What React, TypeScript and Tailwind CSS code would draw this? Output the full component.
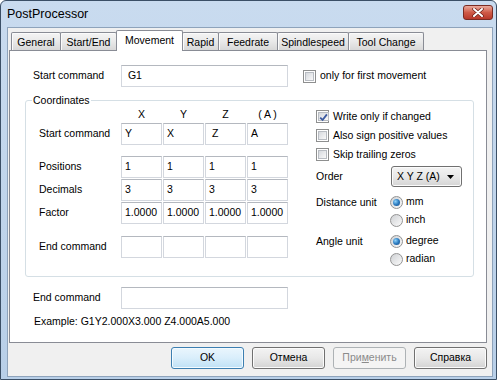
import React from 'react';

const TABS = [
  { label: 'General', w: 'w-[50px]' },
  { label: 'Start/End', w: 'w-[57px]' },
  { label: 'Movement', w: 'w-[67px]', active: true },
  { label: 'Rapid', w: 'w-[37px]' },
  { label: 'Feedrate', w: 'w-[60px]' },
  { label: 'Spindlespeed', w: 'w-[72px]' },
  { label: 'Tool Change', w: 'w-[76px]' },
];

const ROWS = [
  { label: 'Start command', values: ['Y', 'X', ' Z', 'A'], gap: 'mt-[2px]' },
  { label: 'Positions', values: ['1', '1', '1', '1'], gap: 'mt-[11px]' },
  { label: 'Decimals', values: ['3', '3', '3', '3'], gap: 'mt-[1px]' },
  { label: 'Factor', values: ['1.0000', '1.0000', '1.0000', '1.0000'], gap: 'mt-[1px]' },
  { label: 'End command', values: ['', '', '', ''], gap: 'mt-[12px]' },
];

const TextBox: React.FC<{ value?: string; className?: string }> = ({ value = '', className = '' }) => (
  <div
    className={`h-[22px] flex items-center pl-[3px] bg-white border border-[#d3d7de] border-t-[#b4b8bf] whitespace-pre overflow-hidden ${className}`}
  >
    {value}
  </div>
);

const CheckBox: React.FC<{ checked?: boolean }> = ({ checked }) => (
  <span className="w-[13px] h-[13px] border border-[#8e8f8f] bg-white p-[1px] flex shrink-0">
    <span className="flex-1 flex border border-[#b8bcc2] bg-linear-to-br from-[#d6d9de] to-[#f9f9f9]">
      {checked && (
        <svg viewBox="0 0 9 9" className="w-[9px] h-[9px]">
          <path d="M1.2 4.6 L3.6 7 L7.9 1.4" fill="none" stroke="#3c5aa0" strokeWidth="1.8" />
        </svg>
      )}
    </span>
  </span>
);

const Radio: React.FC<{ checked?: boolean }> = ({ checked }) => (
  <span className="w-[13px] h-[13px] rounded-full border border-[#939393] bg-linear-to-br from-[#cfd1d4] to-[#fbfbfb] flex items-center justify-center shrink-0">
    {checked && <span className="w-[7px] h-[7px] rounded-full bg-radial-[at_35%_35%] from-[#8fd3fb] via-[#2d7cc0] to-[#174a85]" />}
  </span>
);

const CheckRow: React.FC<{ label: string; checked?: boolean }> = ({ label, checked }) => (
  <div className="h-[19px] flex items-center gap-[4px]">
    <CheckBox checked={checked} />
    <span>{label}</span>
  </div>
);

const RadioRow: React.FC<{ label: string; checked?: boolean }> = ({ label, checked }) => (
  <div className="h-[18px] flex items-center gap-[3px]">
    <Radio checked={checked} />
    <span>{label}</span>
  </div>
);

export default function App() {
  return (
    <div className="w-[497px] h-[380px] flex flex-col border border-[#3b4f66] rounded-t-[6px] bg-linear-to-b from-[#c9dbef] to-[#b8cfe8] font-['Liberation_Sans',Arial,sans-serif] text-[10.5px] text-black overflow-hidden">
      {/* title bar */}
      <div className="h-[26px] flex items-start justify-between pl-[6px] pr-[3px] shrink-0">
        <span className="text-[12.5px] leading-[26px]">PostProcessor</span>
        <div className="mt-[4px] w-[30px] h-[15px] rounded-[3px] border border-[#7a2b22] bg-linear-to-b from-[#e9a99c] via-[#cf5a47] to-[#b8382a] flex items-center justify-center">
          <svg viewBox="0 0 12 9" className="w-[12px] h-[9px]">
            <path d="M2 1 L10 8 M10 1 L2 8" stroke="#6a1e16" strokeWidth="3.4" strokeLinecap="round" />
            <path d="M2 1 L10 8 M10 1 L2 8" stroke="#ffffff" strokeWidth="2" strokeLinecap="round" />
          </svg>
        </div>
      </div>

      {/* client area */}
      <div className="flex-1 ml-[6px] mr-[3px] mb-[2px] border border-[#8ea3bb] bg-[#f0f0f0] flex flex-col">
        {/* tab strip */}
        <div className="flex items-end pt-[2px] ml-[3px] -mb-[1px] relative z-10">
          {TABS.map((t, i) =>
            t.active ? (
              <div
                key={t.label}
                className={`${t.w} h-[21px] -ml-[1px] relative z-10 bg-white border border-b-0 border-[#898c95] rounded-t-[2px] flex items-center justify-center pb-[1px]`}
              >
                {t.label}
              </div>
            ) : (
              <div
                key={t.label}
                className={`${t.w} h-[18px] mb-[1px] ${i > 0 ? '-ml-[1px]' : ''} border border-b-0 border-[#898c95] rounded-t-[2px] bg-linear-to-b from-[#f4f4f4] via-[#e9e9e9] to-[#d8d8d8] shadow-[inset_1px_1px_0_#fbfbfb] flex items-center justify-center pt-[2px]`}
              >
                {t.label}
              </div>
            ),
          )}
        </div>

        {/* tab panel */}
        <div className="ml-[1px] w-[478px] h-[293px] border border-[#898c95] bg-white flex flex-col">
          <div className="mt-[14px] pl-[23px] flex items-center">
            <span className="w-[88px]">Start command</span>
            <TextBox value=" G1" className="w-[167px]" />
            <div className="ml-[15px] flex items-center gap-[4px]">
              <CheckBox />
              <span>only for first movement</span>
            </div>
          </div>

          {/* Coordinates group */}
          <div className="mt-[13px] ml-[15px] w-[449px] h-[177px] border border-[#d5dfe5] rounded-[3px] flex flex-col">
            <div className="-mt-[8px] ml-[6px] px-[1px] w-fit bg-white leading-[14px]">Coordinates</div>
            <div className="flex pl-[13px]">
              <div className="flex flex-col">
                <div className="h-[14px] flex">
                  <span className="w-[82px]" />
                  <div className="grid grid-cols-[repeat(4,41px)] gap-x-[1px] text-center leading-[14px]">
                    <span>X</span>
                    <span>Y</span>
                    <span>Z</span>
                    <span className="whitespace-pre">( A )</span>
                  </div>
                </div>
                {ROWS.map((r) => (
                  <div key={r.label} className={`flex items-center ${r.gap}`}>
                    <span className="w-[82px]">{r.label}</span>
                    <div className="grid grid-cols-[repeat(4,41px)] gap-x-[1px]">
                      {r.values.map((v, i) => (
                        <TextBox key={i} value={v} />
                      ))}
                    </div>
                  </div>
                ))}
              </div>

              <div className="ml-[28px] flex flex-col">
                <CheckRow label="Write only if changed" checked />
                <CheckRow label="Also sign positive values" />
                <CheckRow label="Skip trailing zeros" />
                <div className="mt-[2px] flex items-center">
                  <span className="w-[75px]">Order</span>
                  <div className="w-[71px] h-[21px] rounded-[3px] border border-[#707070] bg-linear-to-b from-[#f3f3f3] via-[#e8e8e8] to-[#d4d4d4] shadow-[inset_0_0_0_1px_#fbfbfb] flex items-center justify-between pl-[5px] pr-[7px]">
                    <span>X Y Z (A)</span>
                    <svg viewBox="0 0 7 4" className="w-[7px] h-[4px]">
                      <path d="M0 0 H7 L3.5 4 Z" fill="#000" />
                    </svg>
                  </div>
                </div>
                <div className="mt-[6px] flex items-start">
                  <span className="w-[74px] leading-[18px]">Distance unit</span>
                  <div className="flex flex-col">
                    <RadioRow label="mm" checked />
                    <RadioRow label="inch" />
                  </div>
                </div>
                <div className="mt-[3px] flex items-start">
                  <span className="w-[74px] leading-[18px]">Angle unit</span>
                  <div className="flex flex-col">
                    <RadioRow label="degree" checked />
                    <RadioRow label="radian" />
                  </div>
                </div>
              </div>
            </div>
          </div>

          <div className="mt-[10px] pl-[23px] flex items-center">
            <span className="w-[88px]">End command</span>
            <TextBox className="w-[167px]" />
          </div>
          <div className="mt-[5px] pl-[24px] leading-[14px]">Example: G1Y2.000X3.000 Z4.000A5.000</div>
        </div>

        {/* dialog buttons */}
        <div className="mt-[4px] mr-[5px] flex justify-end gap-[8px]">
          <button className="w-[73px] h-[22px] rounded-[3px] border border-[#3c7fb1] bg-linear-to-b from-[#eaf6fd] via-[#d9eefb] to-[#bfe1f6] shadow-[inset_0_0_0_1px_#f4fbff]">
            OK
          </button>
          <button className="w-[73px] h-[22px] rounded-[3px] border border-[#707070] bg-linear-to-b from-[#f3f3f3] via-[#e8e8e8] to-[#d3d3d3] shadow-[inset_0_0_0_1px_#fbfbfb]">
            Отмена
          </button>
          <button className="w-[73px] h-[22px] rounded-[3px] border border-[#adb2b5] bg-[#f4f4f4] text-[#8b8b8b]">
            При<u>м</u>енить
          </button>
          <button className="w-[73px] h-[22px] rounded-[3px] border border-[#707070] bg-linear-to-b from-[#f3f3f3] via-[#e8e8e8] to-[#d3d3d3] shadow-[inset_0_0_0_1px_#fbfbfb]">
            Справка
          </button>
        </div>
      </div>
    </div>
  );
}
